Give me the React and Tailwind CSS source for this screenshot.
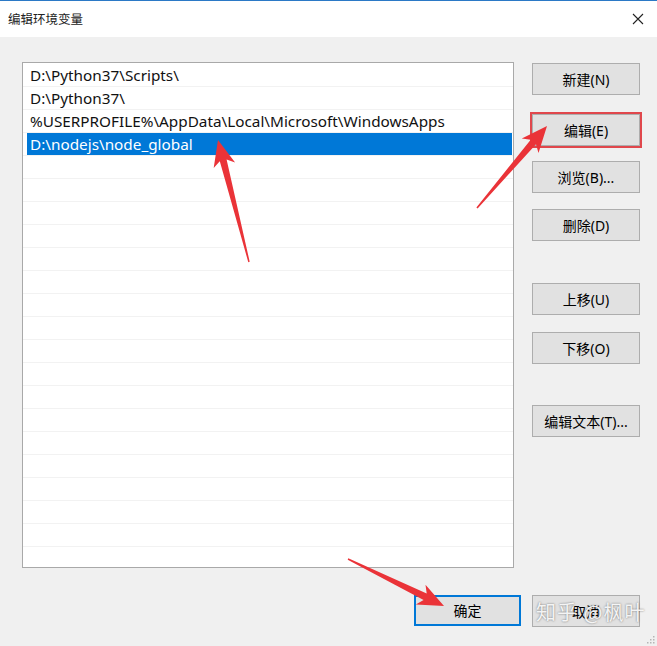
import React from 'react';

const paths = [
  'D:\\Python37\\Scripts\\',
  'D:\\Python37\\',
  '%USERPROFILE%\\AppData\\Local\\Microsoft\\WindowsApps',
  'D:\\nodejs\\node_global',
];

const ROWS = 22;

// tapered annotation arrow, tail -> tip
const arrowPoints = (tx, ty, hx, hy) => {
  const dx = hx - tx, dy = hy - ty;
  const len = Math.hypot(dx, dy);
  const ux = dx / len, uy = dy / len;
  const nx = -uy, ny = ux;
  const headLen = 26, headW = 22, shaftW = 7, tailW = 1.5;
  const bx = hx - ux * headLen, by = hy - uy * headLen;
  const nb = bx + ux * 5, nby = by + uy * 5;
  const p = (x, y) => `${x.toFixed(1)},${y.toFixed(1)}`;
  return [
    p(tx + nx * tailW / 2, ty + ny * tailW / 2),
    p(nb + nx * shaftW / 2, nby + ny * shaftW / 2),
    p(bx + nx * headW / 2, by + ny * headW / 2),
    p(hx, hy),
    p(bx - nx * headW / 2, by - ny * headW / 2),
    p(nb - nx * shaftW / 2, nby - ny * shaftW / 2),
    p(tx - nx * tailW / 2, ty - ny * tailW / 2),
  ].join(' ');
};

const Btn = ({ label, className = '' }) => (
  <div
    className={`h-[32px] w-[108px] flex items-center justify-center bg-[#e1e1e1] border border-[#adadad] text-[14px] text-black ${className}`}
  >
    {label}
  </div>
);

export default function App() {
  const rows = Array.from({ length: ROWS }, (_, i) => paths[i] ?? '');

  return (
    <div className="relative w-[657px] h-[646px] flex flex-col bg-[#f0f0f0] font-['Noto_Sans','Noto_Sans_CJK_SC',sans-serif] overflow-hidden">
      {/* title bar */}
      <div className="h-[37px] bg-white border-t border-[#2b79c6] flex items-center justify-between pl-[8px] pr-[13px]">
        <span className="text-[12.5px] text-[#222] font-['Noto_Sans_CJK_SC',sans-serif]">编辑环境变量</span>
        <svg width="12" height="12" viewBox="0 0 12 12">
          <path d="M1 1L11 11M11 1L1 11" stroke="#222" strokeWidth="1.1" />
        </svg>
      </div>

      <div className="flex pl-[22px] pt-[25px]">
        {/* path list */}
        <div className="w-[492px] h-[506px] bg-white border border-[#a9a9a9] overflow-hidden pt-[1px]">
          {rows.map((text, i) => {
            const selected = i === 3;
            return (
              <div key={i} className="h-[23px] border-b border-[#f2f2f2] flex">
                <div
                  className={`flex-1 ml-[4px] mr-[1px] pl-[3px] pt-[1px] flex items-center text-[15.3px] leading-none whitespace-nowrap ${
                    selected ? 'bg-[#0078d7] text-white' : 'text-[#111]'
                  }`}
                >
                  {text}
                </div>
              </div>
            );
          })}
        </div>

        {/* side buttons */}
        <div className="flex flex-col ml-[18px] pt-[1px]">
          <Btn label="新建(N)" />
          <Btn label="编辑(E)" className="mt-[19px] outline-2 outline-[#e0474c]" />
          <Btn label="浏览(B)..." className="mt-[15px]" />
          <Btn label="删除(D)" className="mt-[16px]" />
          <Btn label="上移(U)" className="mt-[42px]" />
          <Btn label="下移(O)" className="mt-[17px]" />
          <Btn label="编辑文本(T)..." className="mt-[41px]" />
        </div>
      </div>

      {/* OK / Cancel */}
      <div className="flex justify-end gap-[11px] pr-[17px] mt-[27px]">
        <div className="h-[31px] w-[107px] flex items-center justify-center bg-[#e1e1e1] border-2 border-[#0078d7] text-[14px] text-black">
          确定
        </div>
        <Btn label="取消" />
      </div>

      {/* watermark */}
      <div className="absolute left-[536px] top-[597px] text-[20px] text-white/90 font-['Noto_Sans_CJK_SC',sans-serif] [text-shadow:0_0_2px_rgba(0,0,0,0.55)] tracking-[1px]">
        知乎 @枫叶
      </div>

      {/* resize grip */}
      <svg className="absolute right-[2px] bottom-[2px]" width="10" height="10" viewBox="0 0 10 10">
        {[[8, 2], [8, 5], [5, 5], [8, 8], [5, 8], [2, 8]].map(([x, y], i) => (
          <rect key={i} x={x} y={y} width="1.5" height="1.5" fill="#b5b5b5" />
        ))}
      </svg>

      {/* annotation arrows */}
      <svg className="absolute inset-0 pointer-events-none" width="657" height="646">
        <polygon points={arrowPoints(249, 262, 218, 140)} fill="#ea3338" />
        <polygon points={arrowPoints(477, 208, 547, 126)} fill="#ea3338" />
        <polygon points={arrowPoints(348, 559, 444, 606)} fill="#ea3338" />
      </svg>
    </div>
  );
}
